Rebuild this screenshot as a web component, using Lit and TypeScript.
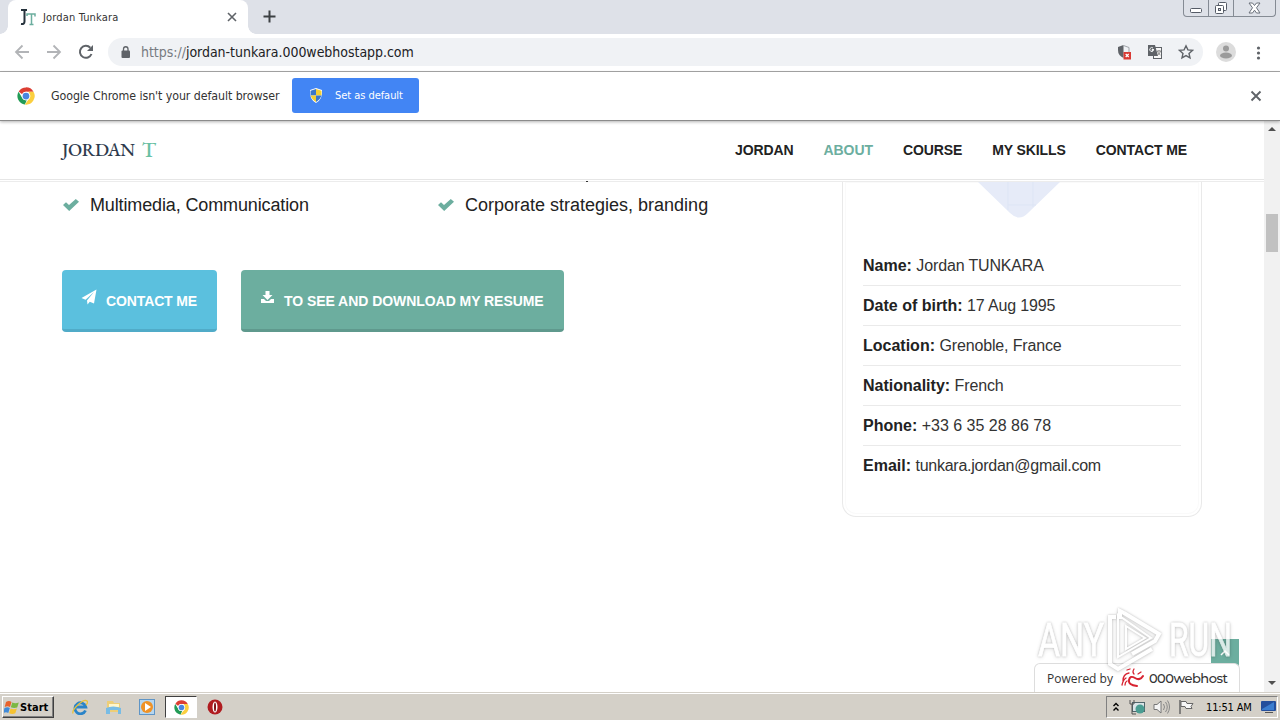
import { LitElement, html, css } from "lit";
import { customElement } from "lit/decorators.js";

const chromeLogo = html`<svg class="logo" viewBox="0 0 48 48">
  <circle cx="24" cy="24" r="23" fill="#fff"/>
  <path d="M24 1a23 23 0 0 1 20 11.500H24a11.500 11.500 0 0 0-10.500 7L4.500 12A23 23 0 0 1 24 1z" fill="#dc3e33"/>
  <path d="M4.100 12.500 14 29.500a11.500 11.500 0 0 0 12 5.800L21 46.800A23 23 0 0 1 4.100 12.500z" fill="#229b56"/>
  <path d="M44 12.500A23 23 0 0 1 21 46.800l12.500-17.300a11.500 11.500 0 0 0-2-13.500V12.500z" fill="#fbcf3f"/>
  <circle cx="24" cy="24" r="11.500" fill="#fff"/><circle cx="24" cy="24" r="9" fill="#4a86e0"/>
</svg>`;

const check = html`<svg class="check" viewBox="0 0 16 12"><path d="M0 6 3 3.200 6 6 12.800 0 16 2.800 6.200 12z" fill="#6cae9f"/></svg>`;

const details = [
  ["Name:", "Jordan TUNKARA"],
  ["Date of birth:", "17 Aug 1995"],
  ["Location:", "Grenoble, France"],
  ["Nationality:", "French"],
  ["Phone:", "+33 6 35 28 86 78"],
  ["Email:", "tunkara.jordan@gmail.com"],
];

@customElement("browser-chrome")
class BrowserChrome extends LitElement {
  static styles = css`
    :host { display: block; flex: none; position: relative; z-index: 3; font-family: "DejaVu Sans Condensed", "DejaVu Sans", sans-serif; font-stretch: condensed; color: #333; }
    svg { display: block; flex: none; }
    .strip { height: 34px; background: #dee1e8; display: flex; padding-left: 8px; position: relative; }
    .tab { box-sizing: border-box; width: 240px; background: #fff; border-radius: 8px 8px 0 0; display: flex; align-items: center; padding: 0 10px 0 12px; position: relative; }
    .tab::before, .tab::after { content: ""; position: absolute; bottom: 0; width: 8px; height: 8px; }
    .tab::before { left: -8px; background: radial-gradient(circle at 0 0, transparent 7.5px, #fff 8px); }
    .tab::after { right: -8px; background: radial-gradient(circle at 100% 0, transparent 7.5px, #fff 8px); }
    .title { flex: 1; margin-left: 7px; font-size: 11px; letter-spacing: 0.15px; }
    .plus { margin: 10px 0 0 15px; }
    .win { position: absolute; right: 4px; top: 0; height: 16px; width: 91px; border: 1px solid #858b94; border-top: 0; border-radius: 0 0 4px 4px; display: flex; }
    .win span { display: flex; align-items: center; justify-content: center; width: 24px; border-right: 1px solid #858b94; }
    .win span:last-child { flex: 1; border: 0; }
    .bar { height: 37px; background: #fff; display: flex; align-items: center; padding-left: 14px; border-bottom: 1px solid #a9a9a9; }
    .nav { display: flex; gap: 16px; width: 94px; margin-top: -1px; }
    .omni { box-sizing: border-box; width: 1095px; height: 28px; border-radius: 14px; background: #f0f2f5; display: flex; align-items: center; padding: 0 9px 0 11px; margin-top: -1px; }
    .url { flex: 1; margin-left: 8px; font-size: 14px; color: #202124; white-space: nowrap; letter-spacing: -0.03px; }
    .url i { font-style: normal; color: #777b80; }
    .acts { display: flex; gap: 15px; align-items: center; }
    .user { margin: -2px 0 0 13px; }
    .dots { margin: 0 0 0 20px; }
    .info { box-sizing: border-box; height: 49px; background: #fff; display: flex; align-items: center; padding: 0 18px 1px 17px; border-bottom: 1px solid #8b8b8b; box-shadow: 0 1px 3px rgba(0,0,0,.3); }
    .logo { width: 18px; height: 18px; }
    .msg { width: 241px; margin-left: 16px; font-size: 12.300px; white-space: nowrap; letter-spacing: -0.07px; }
    .set { box-sizing: border-box; width: 127px; height: 35px; border-radius: 3px; background: #4285f4; color: #fff; font-size: 11px; display: flex; align-items: center; padding-left: 17px; gap: 12px; white-space: nowrap; letter-spacing: -0.05px; }
    .close { margin: 1px 0 0 auto; }
  `;
  render() {
    return html`
      <div class="strip">
        <div class="tab">
          <svg width="16" height="17" viewBox="0 0 16 17"><path d="M1 1h6M4.500 1v11.500q0 3-3.500 2.500" fill="none" stroke="#26323c" stroke-width="2"/><path d="M7 7V5h8v2.500M11.500 5v10M9.500 15.500h4" fill="none" stroke="#6cae9f" stroke-width="1.500"/></svg>
          <span class="title">Jordan Tunkara</span>
          <svg width="12" height="12" viewBox="0 0 12 12"><path d="m2 2 8 8m0-8-8 8" stroke="#5f6368" stroke-width="1.600"/></svg>
        </div>
        <svg class="plus" width="13" height="13" viewBox="0 0 13 13"><path d="M6.500.5v12M.5 6.500h12" stroke="#3c4043" stroke-width="2"/></svg>
        <div class="win">
          <span><svg width="14" height="14" viewBox="0 0 14 14"><rect x="1.500" y="7.500" width="11" height="4" rx="1" fill="#fff" stroke="#555b66"/></svg></span>
          <span><svg width="14" height="14" viewBox="0 0 14 14"><rect x="4.500" y="1.500" width="8" height="8" rx="1" fill="#fff" stroke="#555b66"/><rect x="1.500" y="4.500" width="8" height="8" rx="1" fill="#fff" stroke="#555b66"/><rect x="4.500" y="7.500" width="2" height="2" fill="#dee1e8" stroke="#555b66"/></svg></span>
          <span><svg width="13" height="12" viewBox="0 0 13 12"><path d="M1 1h3.500l2 2.500 2-2.500H12L8.500 5.800 12 11H8.500l-2-2.800-2 2.800H1l3.500-5.200z" fill="#fff" stroke="#6a707a"/></svg></span>
        </div>
      </div>
      <div class="bar">
        <div class="nav">
          <svg width="16" height="16" viewBox="0 0 16 16"><path d="M15 8H2m6.500-6.500L2 8l6.500 6.500" fill="none" stroke="#b2b4b7" stroke-width="1.800"/></svg>
          <svg width="16" height="16" viewBox="0 0 16 16"><path d="M1 8h13M7.500 1.500 14 8l-6.500 6.500" fill="none" stroke="#b2b4b7" stroke-width="1.800"/></svg>
          <svg width="16" height="16" viewBox="0 0 16 16"><path d="M13.500 10A6 6 0 1 1 12.300 3.700" fill="none" stroke="#5f6368" stroke-width="2"/><path d="M15 1v6H9z" fill="#5f6368"/></svg>
        </div>
        <div class="omni">
          <svg width="14" height="14" viewBox="0 0 14 14"><rect x="2.500" y="5.500" width="8.500" height="7.500" rx="1" fill="#5f6368"/><path d="M4.500 6V4a2.250 2.250 0 0 1 4.500 0v2" fill="none" stroke="#5f6368" stroke-width="1.300"/></svg>
          <span class="url"><i>https://</i>jordan-tunkara.000webhostapp.com</span>
          <div class="acts">
            <svg width="16" height="16" viewBox="0 0 16 16"><path d="M7.500 1v13Q2 11.500 2 6V3z" fill="#5f6368"/><path d="M7.500 1.500 13 3.500V8" fill="none" stroke="#a0a4a9"/><rect x="7.500" y="8" width="7.500" height="7.500" fill="#d93a34"/><path d="m9.700 10 3 3m0-3-3 3" stroke="#fff" stroke-width="1.200"/></svg>
            <svg width="16" height="16" viewBox="0 0 16 16"><rect x="6.500" y="3.500" width="8" height="11" fill="#f8f8f8" stroke="#5f6368"/><path d="M1 1h7l3 11H1z" fill="#5f6368"/><path d="M7 5.500H5v1h1.500A2 2 0 1 1 6 4" fill="none" stroke="#f1f3f4"/><path d="M10 7h4m-2-1v1m-1.500 0q.5 3 3 4M13.500 7q-.5 3-3 4" fill="none" stroke="#777" stroke-width=".8"/></svg>
            <svg width="16" height="16" viewBox="0 0 16 16"><path d="m8 1.800 1.900 4.100 4.500.5L11 9.500l1 4.400L8 11.600l-4 2.300 1-4.400L1.600 6.400l4.500-.5z" fill="none" stroke="#5f6368" stroke-width="1.400"/></svg>
          </div>
        </div>
        <svg class="user" width="20" height="20" viewBox="0 0 20 20"><circle cx="10" cy="10" r="10" fill="#dcdcdc"/><circle cx="10" cy="6.500" r="3" fill="#9b9b9b"/><ellipse cx="10" cy="13.500" rx="6" ry="3" fill="#9b9b9b"/></svg>
        <svg class="dots" width="5" height="16" viewBox="0 0 5 16"><g fill="#5f6368"><circle cx="2.500" cy="3" r="1.600"/><circle cx="2.500" cy="8" r="1.600"/><circle cx="2.500" cy="13" r="1.600"/></g></svg>
      </div>
      <div class="info">
        ${chromeLogo}
        <span class="msg">Google Chrome isn't your default browser</span>
        <div class="set">
          <svg width="14" height="15" viewBox="0 0 14 15"><path d="M7 0 1 2q-1 9 6 13 7-4 6-13z" fill="#fff"/><path d="M7 1v6.500H1.500L1.500 2.700z" fill="#3b77c9"/><path d="M7 1v6.500h5.500V2.700zM1.600 7.500H7V14Q2.500 11 1.600 7.500z" fill="#f3cf32"/><path d="M12.400 7.500H7V14q4.500-3 5.400-6.500z" fill="#3b77c9"/></svg>
          <span>Set as default</span>
        </div>
        <svg class="close" width="12" height="12" viewBox="0 0 12 12"><path d="m1.500 1.500 9 9m0-9-9 9" stroke="#5f6368" stroke-width="1.900"/></svg>
      </div>`;
  }
}

@customElement("resume-page")
class ResumePage extends LitElement {
  static styles = css`
    :host { display: flex; flex: 1; min-height: 0; font-family: "Liberation Sans", Arial, sans-serif; color: #222; background: #fff; position: relative; overflow: hidden; }
    svg { display: block; flex: none; }
    .view { flex: 1; position: relative; }
    .head { box-sizing: border-box; height: 59px; display: flex; align-items: center; justify-content: space-between; padding: 0 77px 1px 61px; border-bottom: 1px solid #e6e6e6; box-shadow: 0 1px 0 #fff, 0 2px 0 #ececec; position: relative; background: #fff; }
    .brand { font: 500 18.500px "EB Garamond", "Liberation Serif", serif; color: #2e3b4e; letter-spacing: -0.4px; display: flex; gap: 7px; align-items: center; height: 24px; padding-left: 1px; }
    .brand b { font-weight: 500; font-size: 21px; color: #69c0a3; }
    .menu { display: flex; gap: 30px; font-size: 14px; font-weight: 700; white-space: nowrap; letter-spacing: -0.1px; }
    .on { color: #6cae9f; }
    .body { display: grid; grid-template-columns: 780px 360px; padding-left: 62px; }
    .skills { display: grid; grid-template-columns: 375px 1fr; padding-top: 13px; font-size: 18px; line-height: 24px; }
    .skills div { display: flex; align-items: center; gap: 11px; }
    .skills div:first-child span { letter-spacing: -0.13px; }
    .check { width: 16px; height: 12px; margin-left: 1px; }
    .btns { display: flex; gap: 24px; margin-top: 53px; }
    .btn { box-sizing: border-box; height: 62px; border-radius: 4px; color: #fff; font-size: 14px; font-weight: 700; display: flex; align-items: center; border-bottom: 3px solid; padding: 0 0 0 19px; gap: 9px; white-space: nowrap; letter-spacing: -0.05px; }
    .btn svg { margin-bottom: 6px; }
    .btn span { padding-top: 3px; }
    .blue { width: 155px; background: #5bc0de; border-color: #50abc8; letter-spacing: -0.12px; }
    .green { width: 323px; background: #6cae9f; border-color: #5f998d; }
    .card { box-sizing: border-box; height: 337px; border: 1px solid #e9e9e9; border-top: 0; border-radius: 0 0 14px 14px; padding: 0 20px; box-shadow: inset 0 0 0 2px #fff, inset 0 0 0 3px #fafafa; }
    .gemrow { padding: 1px 0 0 114px; height: 65px; }
    .row { box-sizing: border-box; height: 40px; border-bottom: 1px solid #eaeaea; font-size: 16px; line-height: 40px; white-space: nowrap; color: #333; }
    .row span { letter-spacing: -0.15px; }
    .row:nth-child(6) span { letter-spacing: 0; }
    .row:last-child { border: 0; }
    .row:last-child span { letter-spacing: -0.25px; }
    .row b { color: #222; }
    .scroll { width: 16px; background: #f1f1f1; display: flex; flex-direction: column; align-items: center; justify-content: space-between; padding: 5px 0 6px; box-sizing: border-box; position: relative; }
    .thumb { position: absolute; left: 2px; top: 93px; width: 12px; height: 38px; background: #c1c1c1; }
    .speck { position: absolute; left: 586px; top: 60px; width: 2px; height: 1px; background: #333; }
    .top { position: absolute; left: 1211px; top: 518px; width: 28px; height: 27px; background: #6cae9f; display: flex; align-items: center; justify-content: center; }
    .host { box-sizing: border-box; position: absolute; left: 1034px; top: 542px; width: 206px; height: 29px; background: #fff; border: 1px solid #ddd; border-bottom: 0; border-radius: 6px 6px 0 0; display: flex; align-items: center; padding-left: 12px; color: #333; font: 12px "Open Sans", sans-serif; white-space: nowrap; }
    .host svg { margin: 0 5px 0 8px; }
    .host b { font: 500 13px Montserrat, Inter, sans-serif; letter-spacing: -0.5px; }
    .mark { position: absolute; left: 1034px; top: 484px; filter: drop-shadow(0 0 1px rgba(0,0,0,.28)) drop-shadow(0 1px 2px rgba(0,0,0,.16)); opacity: .75; }
    .mark text { font: 400 46px Roboto, sans-serif; }
  `;
  render() {
    return html`
      <div class="view">
        <div class="head">
          <div class="brand"><span>JORDAN</span><b>T</b></div>
          <nav class="menu"><span>JORDAN</span><span class="on">ABOUT</span><span>COURSE</span><span>MY SKILLS</span><span>CONTACT ME</span></nav>
          <i class="speck"></i>
        </div>
        <div class="body">
          <section>
            <div class="skills"><div>${check}<span>Multimedia, Communication</span></div><div>${check}<span>Corporate strategies, branding</span></div></div>
            <div class="btns">
              <div class="btn blue"><svg width="16" height="16" viewBox="0 0 16 16"><path d="M15.500.5 13 14.500 8.800 12.700 6.500 15.500 6 11.500 13 3 4.500 10.700.5 9z" fill="#fff"/></svg><span>CONTACT ME</span></div>
              <div class="btn green"><svg width="15" height="14" viewBox="0 0 15 14"><path d="M5.500 1h4v4h3l-5 5-5-5h3zM1 9h3l2 2h3l2-2h3v4H1z" fill="#fff"/></svg><span>TO SEE AND DOWNLOAD MY RESUME</span></div>
            </div>
          </section>
          <aside class="card">
            <div class="gemrow"><svg width="84" height="38" viewBox="0 0 84 38"><path d="M0 0h84L51 32q-9 9-18 0z" fill="#e6ebf8"/><path d="M31 0v29M56 0v26M31 24h28" fill="none" stroke="#dde5f5"/></svg></div>
            ${details.map(([k, v]) => html`<div class="row"><b>${k}</b> <span>${v}</span></div>`)}
          </aside>
        </div>
        <div class="top"><svg width="10" height="7" viewBox="0 0 10 7"><path d="m1 6 4-4 4 4" fill="none" stroke="#fff" stroke-width="1.500"/></svg></div>
        <div class="host"><span>Powered by</span><svg width="23" height="20" viewBox="0 0 23 20"><g fill="none" stroke="#d82331" stroke-linecap="round"><path d="M22 8Q19 13 14 10q-5-3-6 2-1 5 8 6" stroke-width="2"/><path d="M2 13Q2 6 8 5M1 17q1-5 4-7M6 2l3-1M13 6q-2-2 0-5M17 6l3-2M4 17q0-3 2-4" stroke-width="1.300"/></g></svg><b>000webhost</b></div>
        <svg class="mark" width="206" height="72" viewBox="0 0 206 72">
          <g fill="#fff" stroke="#fff" stroke-width=".8">
            <text x="4" y="51" textLength="66" lengthAdjust="spacingAndGlyphs">ANY</text>
            <text x="135" y="51" textLength="63" lengthAdjust="spacingAndGlyphs">RUN</text>
          </g>
          <g fill="none" stroke="#fff">
            <path d="M84 10v42l33-19z" stroke-width="2"/>
            <path d="M90 8l35 21-4 7-23 13M90 8l-4-2v8" stroke-width="4"/>
            <path d="M82 12h-6v47l8 5 34-20" stroke-width="4"/>
            <path d="M92 21l19 12-19 11z" stroke-width="2"/>
          </g>
        </svg>
      </div>
      <div class="scroll"><svg width="8" height="5"><path d="m0 5 4-4 4 4z" fill="#505050"/></svg><i class="thumb"></i><svg width="8" height="5"><path d="m0 0 4 4 4-4z" fill="#505050"/></svg></div>`;
  }
}

@customElement("task-bar")
class TaskBar extends LitElement {
  static styles = css`
    :host { box-sizing: border-box; flex: none; height: 28px; background: #d4d0c8; border-top: 1px solid #d4d0c8; box-shadow: inset 0 1px #fff; display: flex; align-items: center; padding: 1px 2px 0; font: 11px "DejaVu Sans Condensed", sans-serif; color: #000; position: relative; z-index: 2; }
    svg { display: block; flex: none; }
    .start { box-sizing: border-box; width: 52px; height: 22px; border: 1px solid; border-color: #fff #404040 #404040 #fff; box-shadow: inset -1px -1px #808080; display: flex; align-items: center; gap: 0; padding-left: 1px; font-weight: 700; font-size: 11px; letter-spacing: .05px; }
    .apps { display: flex; align-items: center; margin-left: 18px; gap: 17px; }
    .active { box-sizing: border-box; width: 32px; height: 22px; background: #fff; border: 1px solid; border-color: #404040 #fff #fff #404040; display: flex; align-items: center; justify-content: center; margin: 0 -7px; }
    .logo { width: 15px; height: 15px; }
    .tray { box-sizing: border-box; margin-left: auto; width: 172px; height: 22px; border: 1px solid; border-color: #808080 #fff #fff #808080; display: flex; align-items: center; padding-left: 6px; white-space: nowrap; }
    .time { width: 50px; letter-spacing: -.15px; margin: 0 4px 0 12px; }
    .g1 { margin-left: 10px; } .g2 { margin-left: 8px; }
  `;
  render() {
    return html`
      <div class="start"><svg width="16" height="16" viewBox="0 0 16 16"><path d="M2 3q3-2 5.500 0L6 8Q3.500 6.500.7 8z" fill="#e8622c"/><path d="M8.300 3.500q3 1.500 6.500 0l-1.600 5Q10 9.500 6.800 8.300z" fill="#7cb843"/><path d="M.5 9q3-1.500 5.300 0l-1.500 5Q2 12.500-.8 14z" fill="#3f8ad8"/><path d="M6.600 9.500q3 1.300 6.300 0l-1.600 4.800q-3 1.200-6.200 0z" fill="#f5c231"/></svg><span>Start</span></div>
      <div class="apps">
        <svg width="16" height="16" viewBox="0 0 16 16"><path d="M13.500 11.500A5.500 5.500 0 1 1 13.800 8H4" fill="none" stroke="#2a84c8" stroke-width="2.800"/><path d="M1 14.500C-.5 10 12-1 15 2c1 1 0 3-1 4" fill="none" stroke="#e8c23c" stroke-width="1.300"/></svg>
        <svg width="17" height="16" viewBox="0 0 17 16"><path d="M2 2h6l1 2h6v9H2z" fill="#edce78"/><path d="M4 5h10v3H4z" fill="#fff6cc"/><path d="M1 9q7-3 15 0v6h-3v-4H5v4H1z" fill="#78bce5"/></svg>
        <svg width="16" height="16" viewBox="0 0 16 16"><rect x=".5" y=".5" width="15" height="15" fill="#b6d6ef" stroke="#5f95c6"/><circle cx="8" cy="8" r="6" fill="#ef9226"/><path d="m6 4 6 4-6 4z" fill="#fff"/></svg>
        <div class="active">${chromeLogo}</div>
        <svg width="16" height="16" viewBox="0 0 16 16"><circle cx="8" cy="8" r="7.500" fill="#b01c20"/><ellipse cx="8" cy="8" rx="2.500" ry="5.500" fill="#fff"/><ellipse cx="8" cy="8" rx="1" ry="4.500" fill="#7d1115"/></svg>
      </div>
      <div class="tray">
        <svg width="6" height="10" viewBox="0 0 6 10"><path d="m.5 4 2.500-2.500L5.500 4m-5 4.500L3 6l2.500 2.500" fill="none" stroke="#000" stroke-width="1.400"/></svg>
        <svg class="g1" width="16" height="16" viewBox="0 0 16 16"><rect x="3.500" y="3.500" width="12" height="9" fill="#d9e4e7" stroke="#50656b"/><circle cx="11" cy="10" r="4.500" fill="#4a9d92"/><path d="M1 1v4h4V1M3 5v10h4" fill="none" stroke="#555"/></svg>
        <svg class="g2" width="17" height="16" viewBox="0 0 17 16"><path d="M1 5.500h3L8 2v12l-4-3.500H1z" fill="#f4f4f4" stroke="#777"/><path d="M10.500 5q2 3 0 6M12.500 3q3.500 5 0 10M14.500 1.500q4 6.500 0 13" fill="none" stroke="#888"/></svg>
        <svg class="g2" width="16" height="16" viewBox="0 0 16 16"><path d="M2 1v14" stroke="#666" stroke-width="1.500"/><path d="M3 2.500h5l1 2h6l-2 3 1 2H8l-1-2H3z" fill="#f7f7f7" stroke="#666"/></svg>
        <span class="time">11:51 AM</span>
        <svg width="17" height="14" viewBox="0 0 17 14"><rect x="1" y="1" width="15" height="10" rx="1" fill="#244f9c"/><path d="M2 9 14 2v8H2z" fill="#3b7ed0"/><path d="M5 12.500h8" stroke="#555"/></svg>
      </div>`;
  }
}

@customElement("app-root")
class AppRoot extends LitElement {
  static styles = css`:host { display: flex; flex-direction: column; width: 1280px; height: 720px; overflow: hidden; background: #fff; }`;
  render() {
    return html`<browser-chrome></browser-chrome><resume-page></resume-page><task-bar></task-bar>`;
  }
}
